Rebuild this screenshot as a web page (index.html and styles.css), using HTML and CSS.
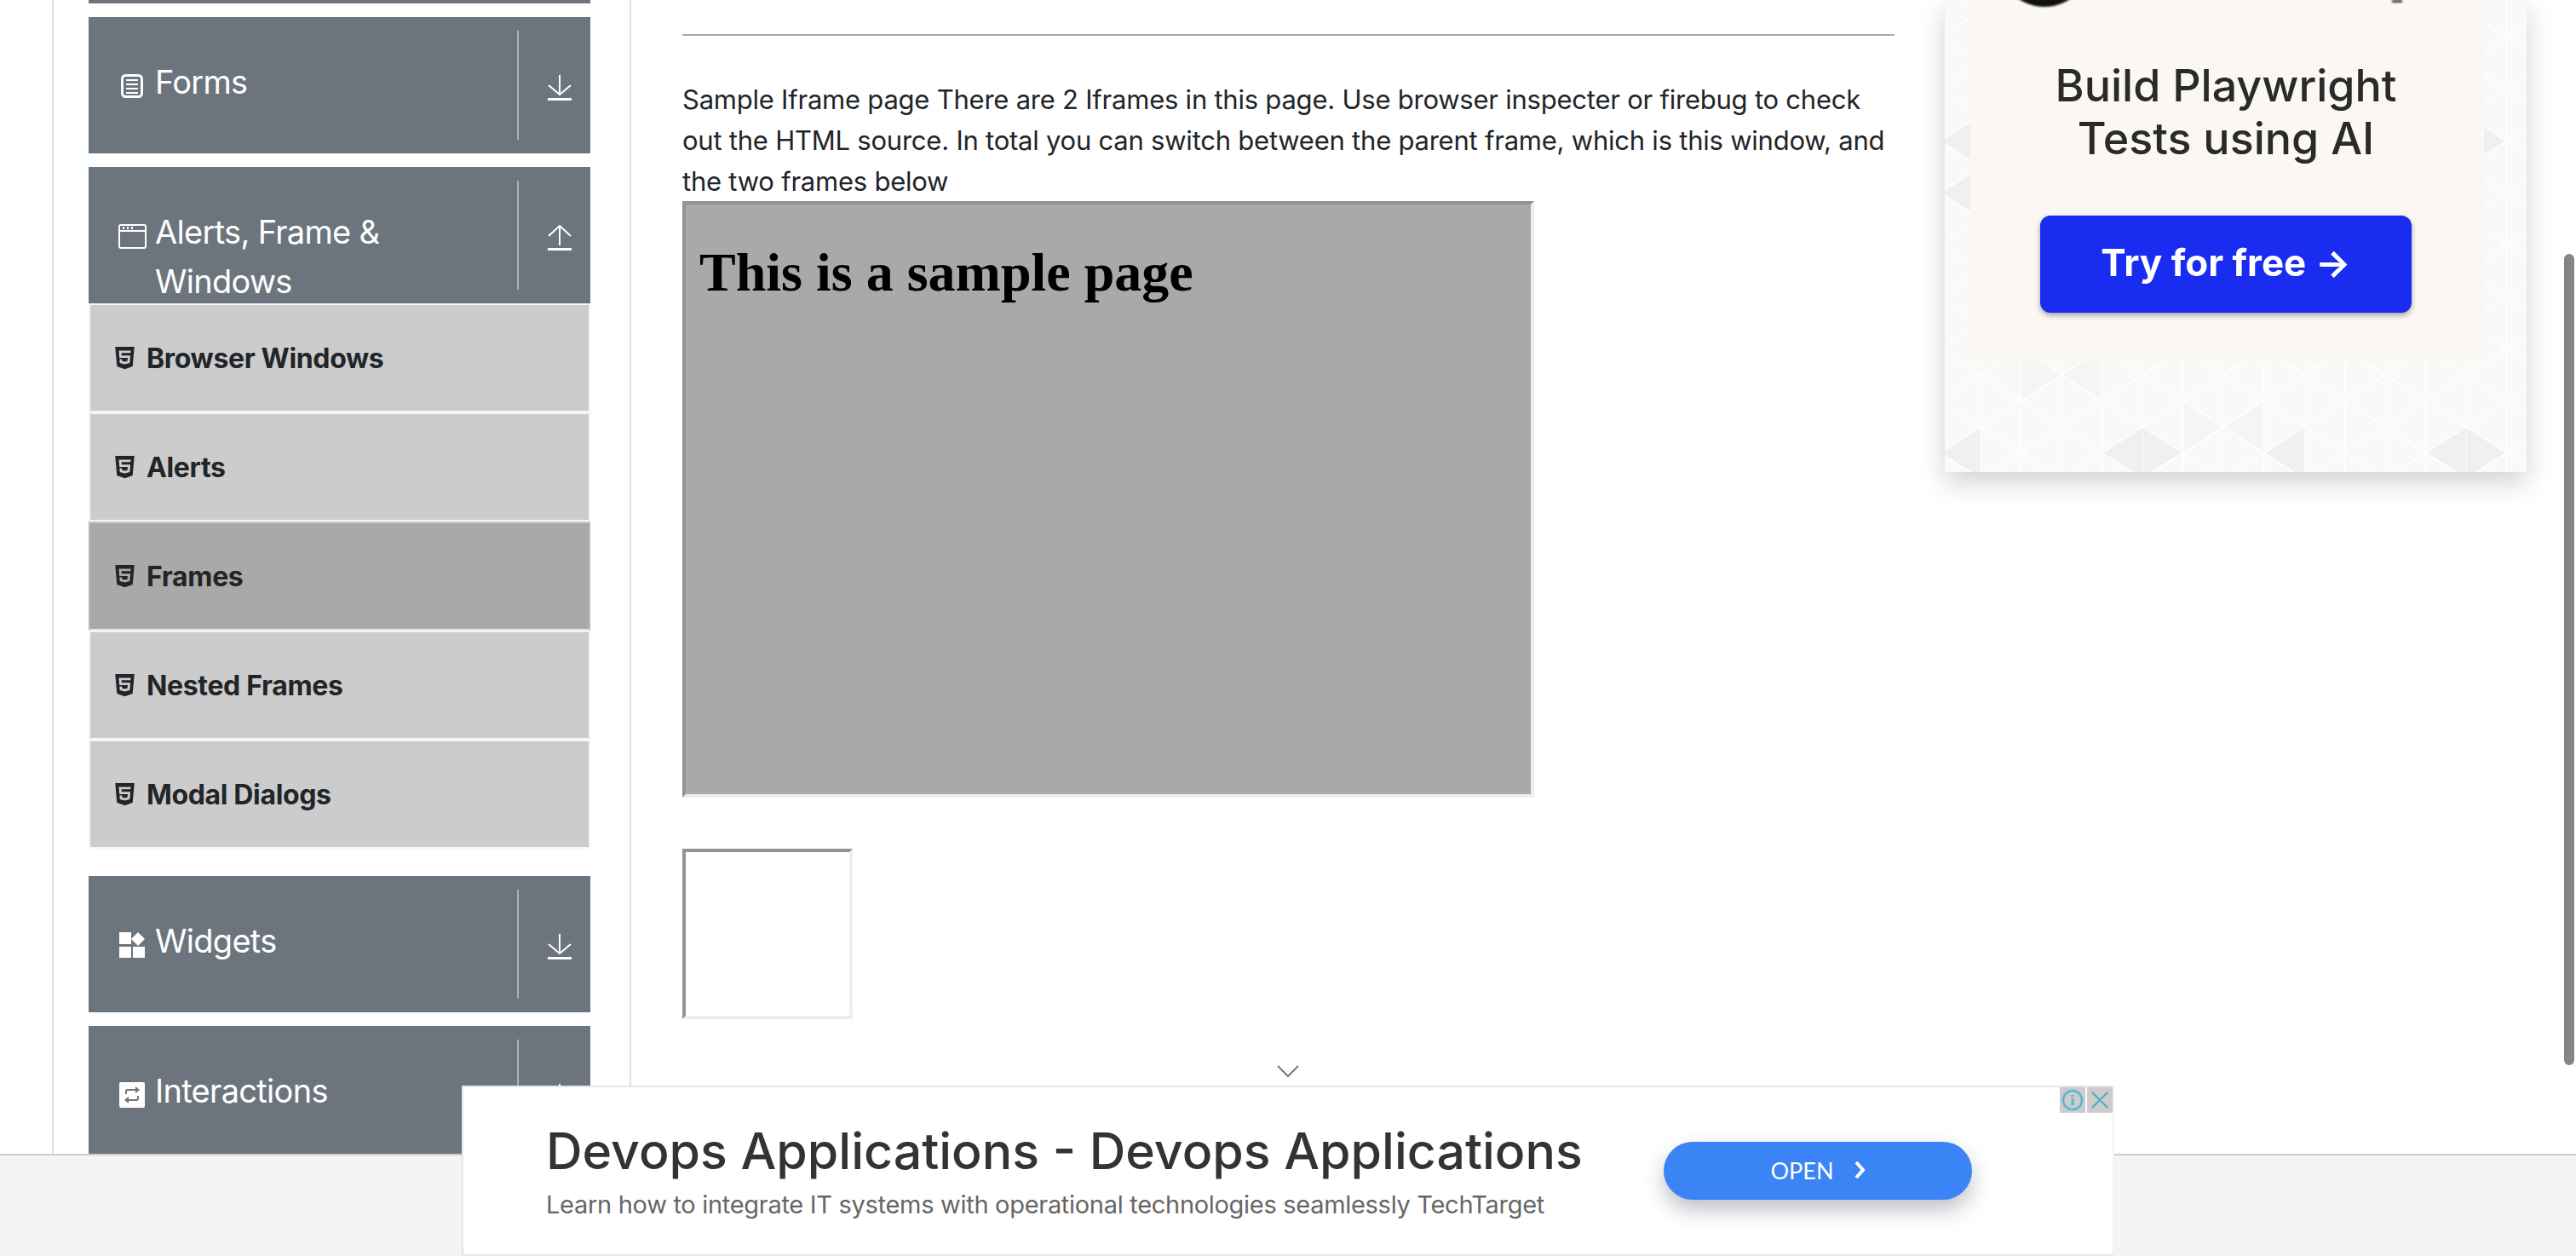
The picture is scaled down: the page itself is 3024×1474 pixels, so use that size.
FILE: index.html
```html
<!DOCTYPE html>
<html lang="en">
<head>
    <meta charset="UTF-8">
    <title>Frames</title>
    <link rel="stylesheet" href="styles.css">
</head>
<body>
    <div class="layout">
        <nav class="sidebar">
            <div class="group group-cut"></div>

            <div class="group">
                <div class="group-title">
                    <span class="group-icon">
                        <svg width="26" height="28" viewBox="0 0 26 28" fill="none" stroke="#fff"><rect x="1.500" y="1.500" width="23" height="25" rx="4" stroke-width="3"/><path d="M6 7h14M6 12h14M6 17h14M6 22h14" stroke-width="2"/></svg>
                    </span>
                    <span>Forms</span>
                </div>
                <div class="group-toggle">
                    <svg width="28" height="30" viewBox="0 0 28 30" fill="none" stroke="#fff" stroke-width="2"><path d="M14 0v23M1 12l13 11 13-11"/><path d="M0 28.500h28" stroke-width="3"/></svg>
                </div>
            </div>

            <div class="group">
                <div class="group-title">
                    <span class="group-icon">
                        <svg width="33" height="29" viewBox="0 0 33 29" fill="none" stroke="#fff" stroke-width="2"><rect x="1" y="1" width="31" height="27" rx="2"/><path d="M1 8h31"/><path d="M5 4.500h2M10 4.500h2M15 4.500h2" stroke-width="3"/></svg>
                    </span>
                    <span>Alerts, Frame &amp; Windows</span>
                </div>
                <div class="group-toggle">
                    <svg width="28" height="30" viewBox="0 0 28 30" fill="none" stroke="#fff" stroke-width="2"><path d="M14 1v23M1 13L14 1l13 12"/><path d="M0 28.500h28" stroke-width="3"/></svg>
                </div>
            </div>
            <ul class="menu">
                <li class="menu-item"><svg class="html5" viewBox="0 0 384 512"><path d="M0 32l34.900 395.800L191.500 480l157.600-52.200L384 32H0zm308.200 127.900H124.400l4.100 49.400h175.600l-13.600 148.400-97.900 27v.3h-1.100l-98.700-27.300-6-75.800h47.700L138 320l53.500 14.500 53.700-14.500 6-62.200H84.300L71.500 112.200h241.100l-4.400 47.700z"/></svg>Browser Windows</li>
                <li class="menu-item"><svg class="html5" viewBox="0 0 384 512"><path d="M0 32l34.900 395.800L191.500 480l157.600-52.200L384 32H0zm308.200 127.900H124.400l4.100 49.400h175.600l-13.600 148.400-97.900 27v.3h-1.100l-98.700-27.300-6-75.800h47.700L138 320l53.500 14.500 53.700-14.500 6-62.200H84.300L71.500 112.200h241.100l-4.400 47.700z"/></svg>Alerts</li>
                <li class="menu-item active"><svg class="html5" viewBox="0 0 384 512"><path d="M0 32l34.900 395.800L191.500 480l157.600-52.200L384 32H0zm308.200 127.900H124.400l4.100 49.400h175.600l-13.600 148.400-97.900 27v.3h-1.100l-98.700-27.300-6-75.800h47.700L138 320l53.500 14.500 53.700-14.500 6-62.200H84.300L71.500 112.200h241.100l-4.400 47.700z"/></svg>Frames</li>
                <li class="menu-item"><svg class="html5" viewBox="0 0 384 512"><path d="M0 32l34.900 395.800L191.500 480l157.600-52.200L384 32H0zm308.200 127.900H124.400l4.100 49.400h175.600l-13.600 148.400-97.900 27v.3h-1.100l-98.700-27.300-6-75.800h47.700L138 320l53.500 14.500 53.700-14.500 6-62.200H84.300L71.500 112.200h241.100l-4.400 47.700z"/></svg>Nested Frames</li>
                <li class="menu-item"><svg class="html5" viewBox="0 0 384 512"><path d="M0 32l34.900 395.800L191.500 480l157.600-52.200L384 32H0zm308.200 127.900H124.400l4.100 49.400h175.600l-13.600 148.400-97.900 27v.3h-1.100l-98.700-27.300-6-75.800h47.700L138 320l53.500 14.500 53.700-14.500 6-62.200H84.300L71.500 112.200h241.100l-4.400 47.700z"/></svg>Modal Dialogs</li>
            </ul>

            <div class="group">
                <div class="group-title">
                    <span class="group-icon">
                        <svg width="30" height="30" viewBox="0 0 30 30" fill="#fff"><rect x="0" y="0" width="14" height="14"/><rect x="0" y="17" width="14" height="13"/><rect x="16" y="17" width="14" height="13"/><path d="M22 0l8 8-8 8-8-8z"/></svg>
                    </span>
                    <span>Widgets</span>
                </div>
                <div class="group-toggle">
                    <svg width="28" height="30" viewBox="0 0 28 30" fill="none" stroke="#fff" stroke-width="2"><path d="M14 0v23M1 12l13 11 13-11"/><path d="M0 28.500h28" stroke-width="3"/></svg>
                </div>
            </div>

            <div class="group">
                <div class="group-title">
                    <span class="group-icon">
                        <svg width="30" height="30" viewBox="0 0 30 30"><rect width="30" height="30" rx="2" fill="#fff"/><path d="M8 14v-3a2 2 0 0 1 2-2h12M22 16v3a2 2 0 0 1-2 2H8" fill="none" stroke="#6c757d" stroke-width="2"/><path d="M19 5l5 4-5 4zM11 17l-5 4 5 4z" fill="#6c757d"/></svg>
                    </span>
                    <span>Interactions</span>
                </div>
                <div class="group-toggle">
                    <svg width="28" height="30" viewBox="0 0 28 30" fill="none" stroke="#fff" stroke-width="2"><path d="M14 0v23M1 12l13 11 13-11"/><path d="M0 28.500h28" stroke-width="3"/></svg>
                </div>
            </div>
        </nav>

        <main class="content">
            <hr class="rule">
            <p class="intro">Sample Iframe page There are 2 Iframes in this page. Use browser inspecter or firebug to check out the HTML source. In total you can switch between the parent frame, which is this window, and the two frames below</p>
            <div class="frame frame-big">
                <h1>This is a sample page</h1>
            </div>
            <div class="frame frame-small"></div>
            <div class="more">
                <svg width="26" height="14" viewBox="0 0 26 14" fill="none" stroke="#777" stroke-width="2"><path d="M1 1l12 12L25 1"/></svg>
            </div>
        </main>

        <aside class="side-ad">
            <svg class="side-ad-bg" viewBox="0 0 683 554" width="683" height="554">
                <defs>
                    <pattern id="tri" width="95" height="61" patternUnits="userSpaceOnUse" patternTransform="translate(42 13)">
                        <path d="M0 0L95 61M95 0L0 61M0 0V61M47.500 0V61" stroke="#fff" stroke-width="1.500"/>
                    </pattern>
                </defs>
                <rect width="683" height="554" fill="#f9f9f9"/>
                <g fill="#f0f0f0">
                    <polygon points="232,500 232,561 184.500,530.500"/>
                    <polygon points="232,500 232,561 279.500,530.500"/>
                    <polygon points="42,500 42,561 -5.500,530.500"/>
                    <polygon points="422,500 422,561 374.500,530.500"/>
                    <polygon points="612,500 612,561 564.500,530.500"/>
                    <polygon points="612,500 612,561 659.500,530.500"/>
                    <polygon points="42,135 42,196 -5.500,165.500"/>
                    <polygon points="42,196 42,257 -5.500,226.500"/>
                    <polygon points="612,135 612,196 659.500,165.500"/>
                </g>
                <g fill="#f5f5f5">
                    <polygon points="279.500,470.500 279.500,531.500 327,501"/>
                    <polygon points="374.500,470.500 374.500,531.500 327,501"/>
                    <polygon points="89.500,409 89.500,470 137,439.500"/>
                    <polygon points="184.500,409 184.500,470 137,439.500"/>
                </g>
                <rect width="683" height="554" fill="url(#tri)"/>
            </svg>
            <div class="side-card">
                <span class="side-logo"></span>
                <span class="side-mark"></span>
                <div class="side-title">Build Playwright<br>Tests using AI</div>
                <div class="side-btn">Try for free →</div>
            </div>
        </aside>
    </div>

    <footer class="footer"></footer>

    <div class="banner">
        <div class="banner-text">
            <div class="banner-title">Devops Applications - Devops Applications</div>
            <div class="banner-sub">Learn how to integrate IT systems with operational technologies seamlessly TechTarget</div>
        </div>
        <div class="banner-btn">
            <span>OPEN</span>
            <svg width="13" height="20" viewBox="0 0 13 20" fill="none" stroke="#fff" stroke-width="4"><path d="M2 1l8 9-8 9"/></svg>
        </div>
        <div class="banner-marks">
            <span class="mark"><svg width="26" height="26" viewBox="0 0 26 26" fill="none" stroke="#5bb6cf"><circle cx="13" cy="13" r="11" stroke-width="2.500"/><path d="M13 11v8M13 7v2" stroke-width="3"/></svg></span>
            <span class="mark"><svg width="24" height="24" viewBox="0 0 24 24" fill="none" stroke="#4aaccb" stroke-width="2"><path d="M3 3l18 18M21 3L3 21"/></svg></span>
        </div>
    </div>

    <div class="scrollbar"></div>
</body>
</html>
```

FILE: styles.css
```css
* {
    box-sizing: border-box;
}
html, body {
    margin: 0;
    height: 1474px;
    overflow: hidden;
}
body {
    font-family: Inter, "Liberation Sans", sans-serif;
    color: #212529;
    background: #fff;
}
.layout {
    display: flex;
    align-items: flex-start;
    height: 1354px;
    overflow: hidden;
}

/* sidebar */
.sidebar {
    width: 680px;
    height: 1354px;
    margin-left: 61px;
    padding: 0 46px 0 41px;
    border-left: 2px solid #dee2e6;
    border-right: 2px solid #dee2e6;
    flex-shrink: 0;
    overflow: hidden;
}
.group {
    display: flex;
    height: 160px;
    margin-bottom: 16px;
    background: #6c757d;
    color: #fff;
    overflow: hidden;
}
.group-cut {
    height: 4px;
}
.group-title {
    flex: 1;
    display: flex;
    align-items: flex-start;
    padding: 47px 10px 0 33px;
    font-size: 38px;
    line-height: 58px;
    letter-spacing: -0.7px;
}
.group-icon {
    width: 36px;
    height: 30px;
    margin: 19px 9px 0 0;
    display: flex;
    align-items: center;
    justify-content: center;
    flex-shrink: 0;
}
.group-toggle {
    width: 86px;
    margin: 16px 0;
    padding: 52px 0 0 34px;
    border-left: 2px solid #adb1b6;
    flex-shrink: 0;
}
.group-toggle svg {
    display: block;
}
.menu {
    list-style: none;
    margin: -16px 0 32px;
    padding: 0;
}
.menu-item {
    display: flex;
    align-items: center;
    height: 128px;
    padding-left: 29px;
    border: 2px solid #f6f6f6;
    background: #ccc;
    font-size: 32px;
    font-weight: 700;
    letter-spacing: -0.35px;
}
.menu-item.active {
    background: #a9a9a9;
    border-color: #c6ccd2 #b4b8bc #e4e7ea;
}
.html5 {
    width: 23px;
    height: 30px;
    margin-right: 14px;
    fill: #212529;
    flex-shrink: 0;
}

/* main column */
.content {
    width: 1423px;
    margin-left: 60px;
    padding-top: 40px;
    flex-shrink: 0;
}
.rule {
    height: 2px;
    margin: 0 0 51px;
    border: 0;
    background: #aaa;
}
.intro {
    margin: 0 0 -1px;
    font-size: 31px;
    line-height: 48px;
    letter-spacing: -0.23px;
}
.frame {
    border: 4px solid;
    border-color: #939393 #eee #eee #939393;
}
.frame-big {
    width: 1000px;
    height: 700px;
    padding: 16px;
    background: #a9a9a9;
}
.frame-big h1 {
    margin: 27px 0 0;
    font-family: "Liberation Serif", serif;
    font-size: 64px;
    font-weight: 700;
    line-height: 74px;
    color: #000;
}
.frame-small {
    width: 200px;
    height: 200px;
    margin-top: 60px;
}
.more {
    display: flex;
    justify-content: center;
    margin-top: 54px;
    padding-right: 2px;
}

/* right ad */
.side-ad {
    position: relative;
    width: 683px;
    height: 554px;
    margin-left: 59px;
    flex-shrink: 0;
    box-shadow: 0 12px 30px rgba(0, 0, 0, 0.18);
}
.side-ad-bg {
    position: absolute;
    top: 0;
    left: 0;
}
.side-card {
    position: relative;
    width: 603px;
    height: 424px;
    margin-left: 30px;
    padding-top: 70px;
    background: #fbf8f3;
    text-align: center;
}
.side-logo {
    position: absolute;
    top: -102px;
    left: 32px;
    width: 110px;
    height: 110px;
    border-radius: 50%;
    background: #111;
    filter: blur(1px);
}
.side-mark {
    position: absolute;
    top: 0;
    left: 495px;
    width: 12px;
    height: 3px;
    background: #444;
    filter: blur(1px);
}
.side-title {
    width: 504px;
    margin-left: 48px;
    font-size: 52px;
    font-weight: 500;
    line-height: 62px;
    color: #2a2a2a;
    filter: blur(0.6px);
}
.side-btn {
    width: 436px;
    height: 114px;
    margin: 59px 0 0 82px;
    border-radius: 12px;
    background: #1a2cf0;
    box-shadow: 0 3px 6px rgba(0, 0, 0, 0.35);
    color: #fff;
    font-size: 44px;
    font-weight: 700;
    line-height: 110px;
    filter: blur(0.7px);
}

/* footer and banner */
.footer {
    height: 120px;
    border-top: 2px solid #ccc;
    background: #f4f4f4;
}
.banner {
    position: fixed;
    left: 542px;
    bottom: 0;
    width: 1940px;
    height: 200px;
    display: flex;
    align-items: flex-start;
    padding: 0 0 0 97px;
    border: 2px solid #e6e6e6;
    border-right-color: #f2f2f2;
    background: #fff;
}
.banner-text {
    width: 1312px;
    padding-top: 40px;
    flex-shrink: 0;
}
.banner-title {
    font-size: 59px;
    font-weight: 500;
    line-height: 70px;
    color: #333;
    white-space: nowrap;
}
.banner-sub {
    margin-top: 8px;
    font-size: 29px;
    line-height: 40px;
    letter-spacing: -0.3px;
    color: #666;
    white-space: nowrap;
}
.banner-btn {
    display: flex;
    align-items: center;
    justify-content: center;
    gap: 24px;
    width: 362px;
    height: 68px;
    margin-top: 64px;
    padding-bottom: 2px;
    border-radius: 34px;
    background: #3b84f6;
    box-shadow: 0 12px 24px rgba(40, 50, 70, 0.3);
    color: #fff;
    font-family: Lato, sans-serif;
    font-size: 27px;
}
.banner-marks {
    position: absolute;
    top: 0;
    right: 0;
    display: flex;
    gap: 2px;
}
.mark {
    display: flex;
    align-items: center;
    justify-content: center;
    width: 30px;
    height: 30px;
    background: #ccc;
}
.scrollbar {
    position: fixed;
    top: 298px;
    left: 3010px;
    width: 12px;
    height: 952px;
    border-radius: 6px;
    background: #858585;
}
```
